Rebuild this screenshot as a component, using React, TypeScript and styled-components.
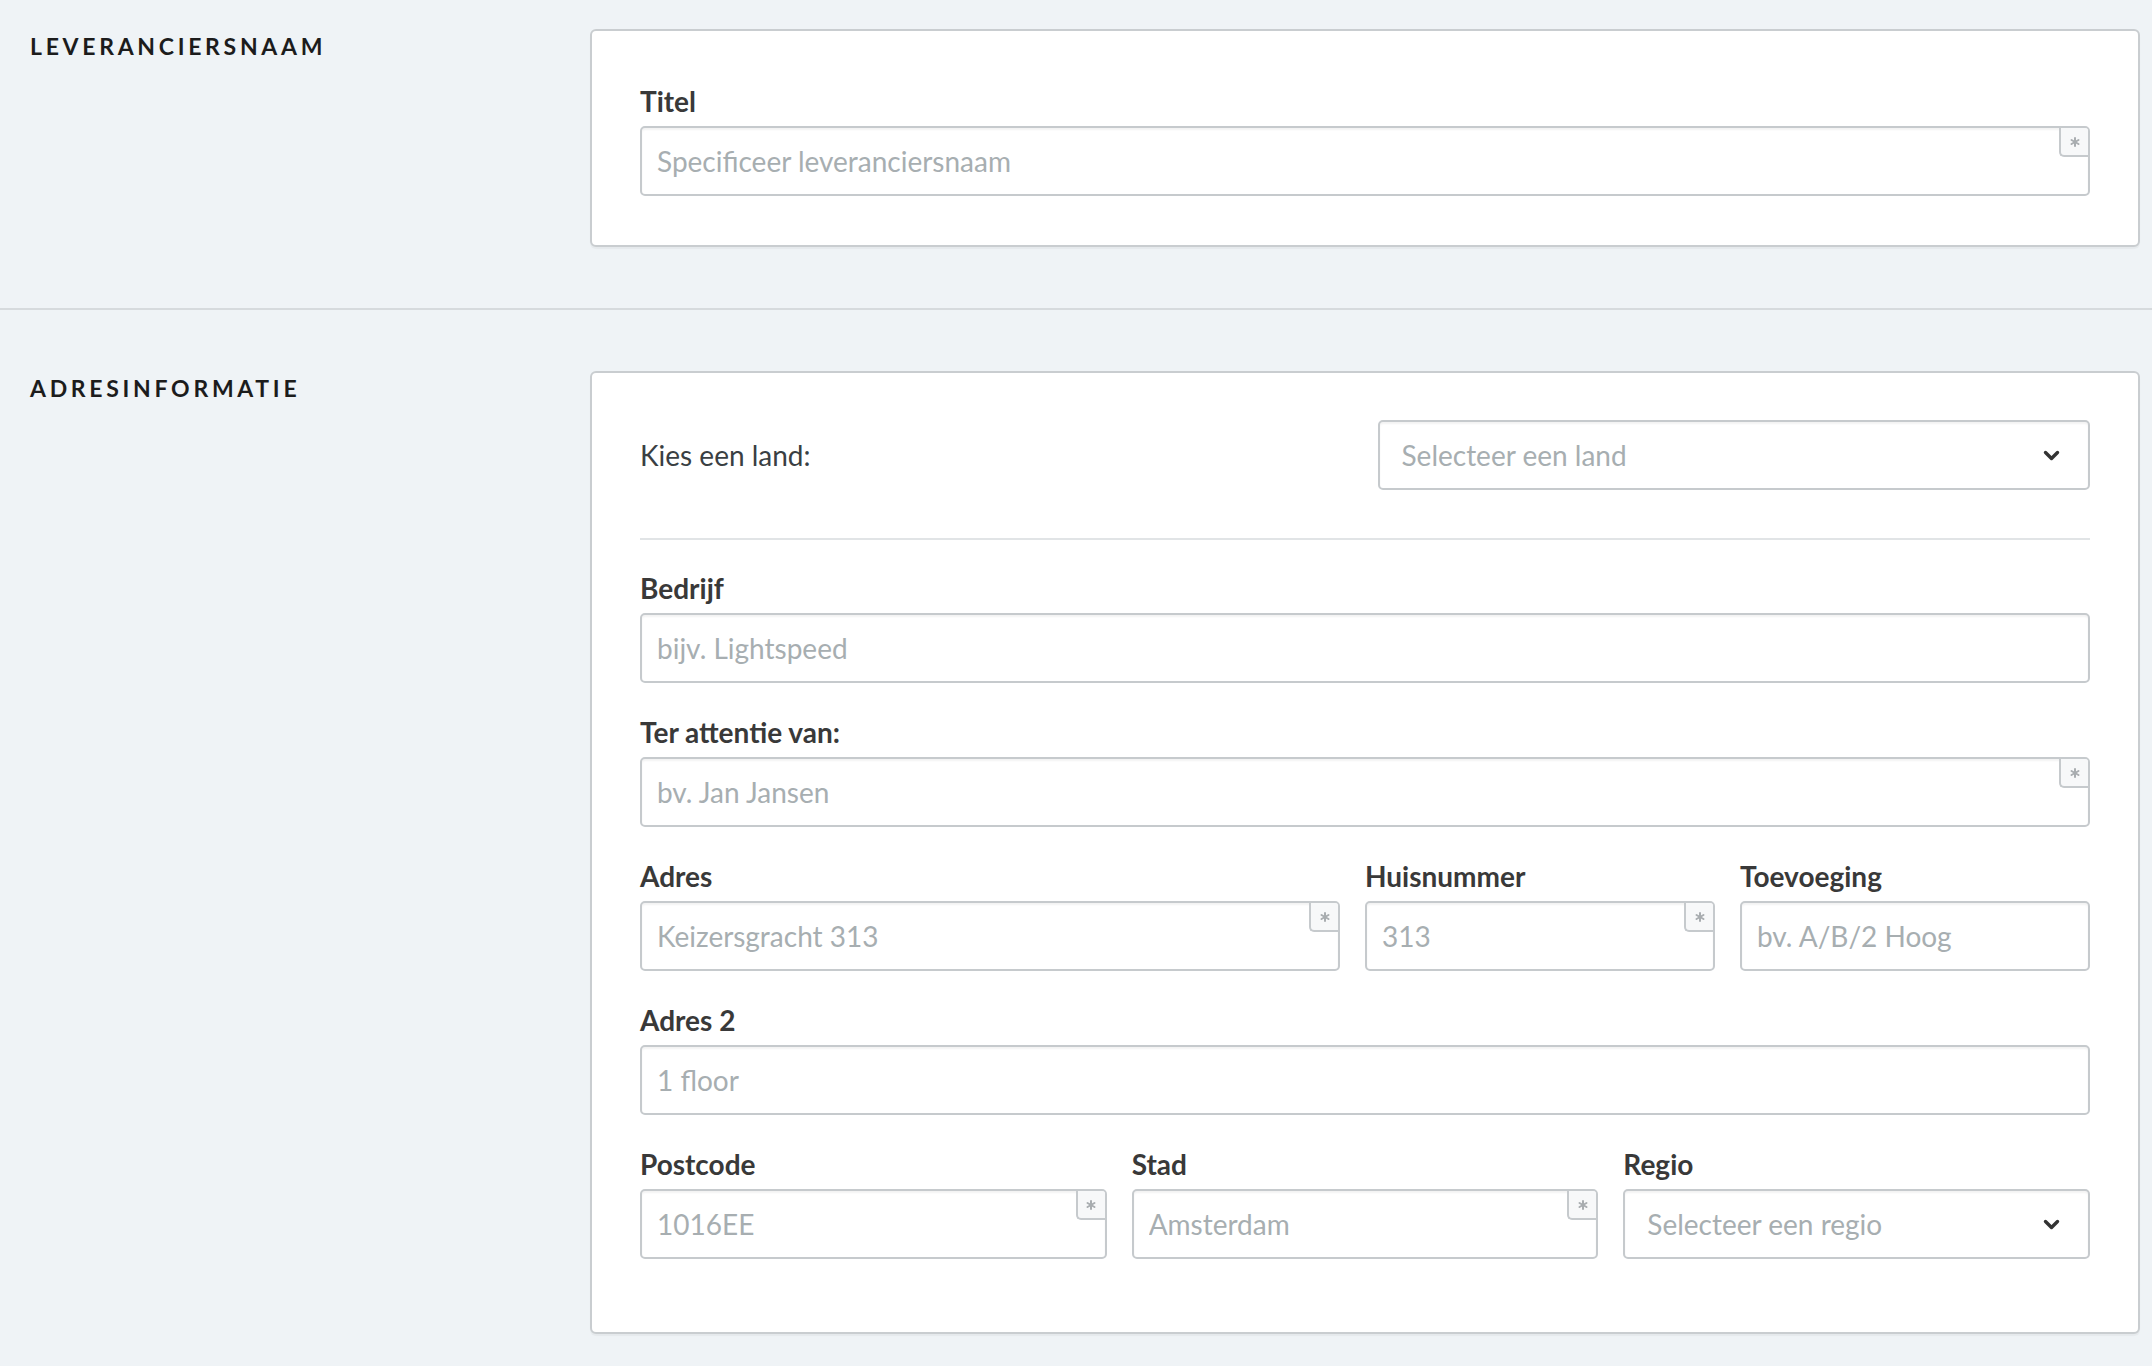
import React from 'react'
import styled, {createGlobalStyle} from 'styled-components'

const GlobalStyle = createGlobalStyle`
  html, body {
    margin: 0;
    background: #eff3f6;
  }
  body {
    font-family: Lato, 'Open Sans', sans-serif;
    color: #3c3c3c;
  }
  * {
    box-sizing: border-box;
  }
`

const Section = styled.section<{$first?: boolean}>`
  display: grid;
  grid-template-columns: 560px 1fr;
  padding: ${p => (p.$first ? '29px 12px 61px' : '61px 12px 30px')} 30px;
  border-bottom: ${p => (p.$first ? '2px solid #d6dadd' : 'none')};
`

const Heading = styled.h2`
  margin: 3px 0 0;
  font-size: 23px;
  font-weight: 700;
  letter-spacing: 3.7px;
  text-transform: uppercase;
  color: #1c1c1c;
  line-height: normal;
`

const Card = styled.div<{$top: number, $bottom: number}>`
  background: #fff;
  border: 2px solid #c9cdd0;
  border-radius: 6px;
  box-shadow: 0 2px 1px rgba(0, 0, 0, 0.04);
  padding: ${p => p.$top}px 48px ${p => p.$bottom}px;
`

const Fields = styled.div`
  display: flex;
  flex-direction: column;
  gap: 32px;
`

const Row = styled.div<{$cols: string}>`
  display: grid;
  grid-template-columns: ${p => p.$cols};
  gap: 25px;
`

const CountryRow = styled.div`
  display: grid;
  grid-template-columns: 1fr 1fr;
  gap: 25px;
  align-items: center;
`

const CountryLabel = styled.span`
  font-size: 28px;
  color: #3a3f43;
`

const Divider = styled.hr`
  margin: 48px 0 31px;
  border: none;
  border-top: 2px solid #e1e4e6;
`

const Label = styled.label`
  display: block;
  font-size: 28px;
  font-weight: 700;
  line-height: 34px;
  margin-bottom: 8px;
  color: #393939;
`

const InputWrap = styled.div`
  position: relative;
`

const TextInput = styled.input`
  display: block;
  width: 100%;
  height: 70px;
  border: 2px solid #c6cacd;
  border-radius: 5px;
  background: #fff;
  box-shadow: inset 0 2px 2px rgba(0, 0, 0, 0.05);
  padding: 0 15px;
  font-family: Lato, 'Open Sans', sans-serif;
  font-size: 28px;
  color: #333;
  outline: none;

  &::placeholder {
    color: #a7aeb1;
  }
`

const Required = styled.span`
  position: absolute;
  top: 2px;
  right: 2px;
  width: 29px;
  height: 29px;
  display: flex;
  align-items: center;
  justify-content: center;
  background: #f7f8f9;
  border-left: 2px solid #c6cacd;
  border-bottom: 2px solid #c6cacd;
  border-bottom-left-radius: 5px;
  border-top-right-radius: 3px;
`

const Select = styled.div`
  height: 70px;
  display: flex;
  align-items: center;
  justify-content: space-between;
  border: 2px solid #c6cacd;
  border-radius: 5px;
  background: #fff;
  box-shadow: inset 0 2px 2px rgba(0, 0, 0, 0.05);
  padding: 0 28px 0 22px;
  font-size: 28px;
  color: #a7aeb1;
  cursor: pointer;
`

const Asterisk = () =>
  <svg width="10" height="10" viewBox="0 0 10 10">
    <g stroke="#a9adb0" strokeWidth="2" strokeLinecap="round">
      <line x1="5" y1="1" x2="5" y2="9" />
      <line x1="1.5" y1="3" x2="8.5" y2="7" />
      <line x1="1.5" y1="7" x2="8.5" y2="3" />
    </g>
  </svg>

const Chevron = () =>
  <svg width="17" height="11" viewBox="0 0 17 11">
    <path d="M2.5 2.5 L8.5 8.5 L14.5 2.5" fill="none" stroke="#333" strokeWidth="3.4" strokeLinecap="round" strokeLinejoin="round" />
  </svg>

const Field = ({label, placeholder, required}: {label: string, placeholder: string, required?: boolean}) =>
  <div>
    <Label>{label}</Label>
    <InputWrap>
      <TextInput placeholder={placeholder} />
      {required && <Required><Asterisk /></Required>}
    </InputWrap>
  </div>

const SelectField = ({label, placeholder}: {label: string, placeholder: string}) =>
  <div>
    <Label>{label}</Label>
    <Select>{placeholder}<Chevron /></Select>
  </div>

export default function App() {
  return (
    <>
      <GlobalStyle />
      <Section $first>
        <Heading>Leveranciersnaam</Heading>
        <Card $top={53} $bottom={49}>
          <Field label="Titel" placeholder="Specificeer leveranciersnaam" required />
        </Card>
      </Section>
      <Section>
        <Heading>Adresinformatie</Heading>
        <Card $top={47} $bottom={73}>
          <CountryRow>
            <CountryLabel>Kies een land:</CountryLabel>
            <Select>Selecteer een land<Chevron /></Select>
          </CountryRow>
          <Divider />
          <Fields>
            <Field label="Bedrijf" placeholder="bijv. Lightspeed" />
            <Field label="Ter attentie van:" placeholder="bv. Jan Jansen" required />
            <Row $cols="2fr 1fr 1fr">
              <Field label="Adres" placeholder="Keizersgracht 313" required />
              <Field label="Huisnummer" placeholder="313" required />
              <Field label="Toevoeging" placeholder="bv. A/B/2 Hoog" />
            </Row>
            <Field label="Adres 2" placeholder="1 floor" />
            <Row $cols="1fr 1fr 1fr">
              <Field label="Postcode" placeholder="1016EE" required />
              <Field label="Stad" placeholder="Amsterdam" required />
              <SelectField label="Regio" placeholder="Selecteer een regio" />
            </Row>
          </Fields>
        </Card>
      </Section>
    </>
  )
}
